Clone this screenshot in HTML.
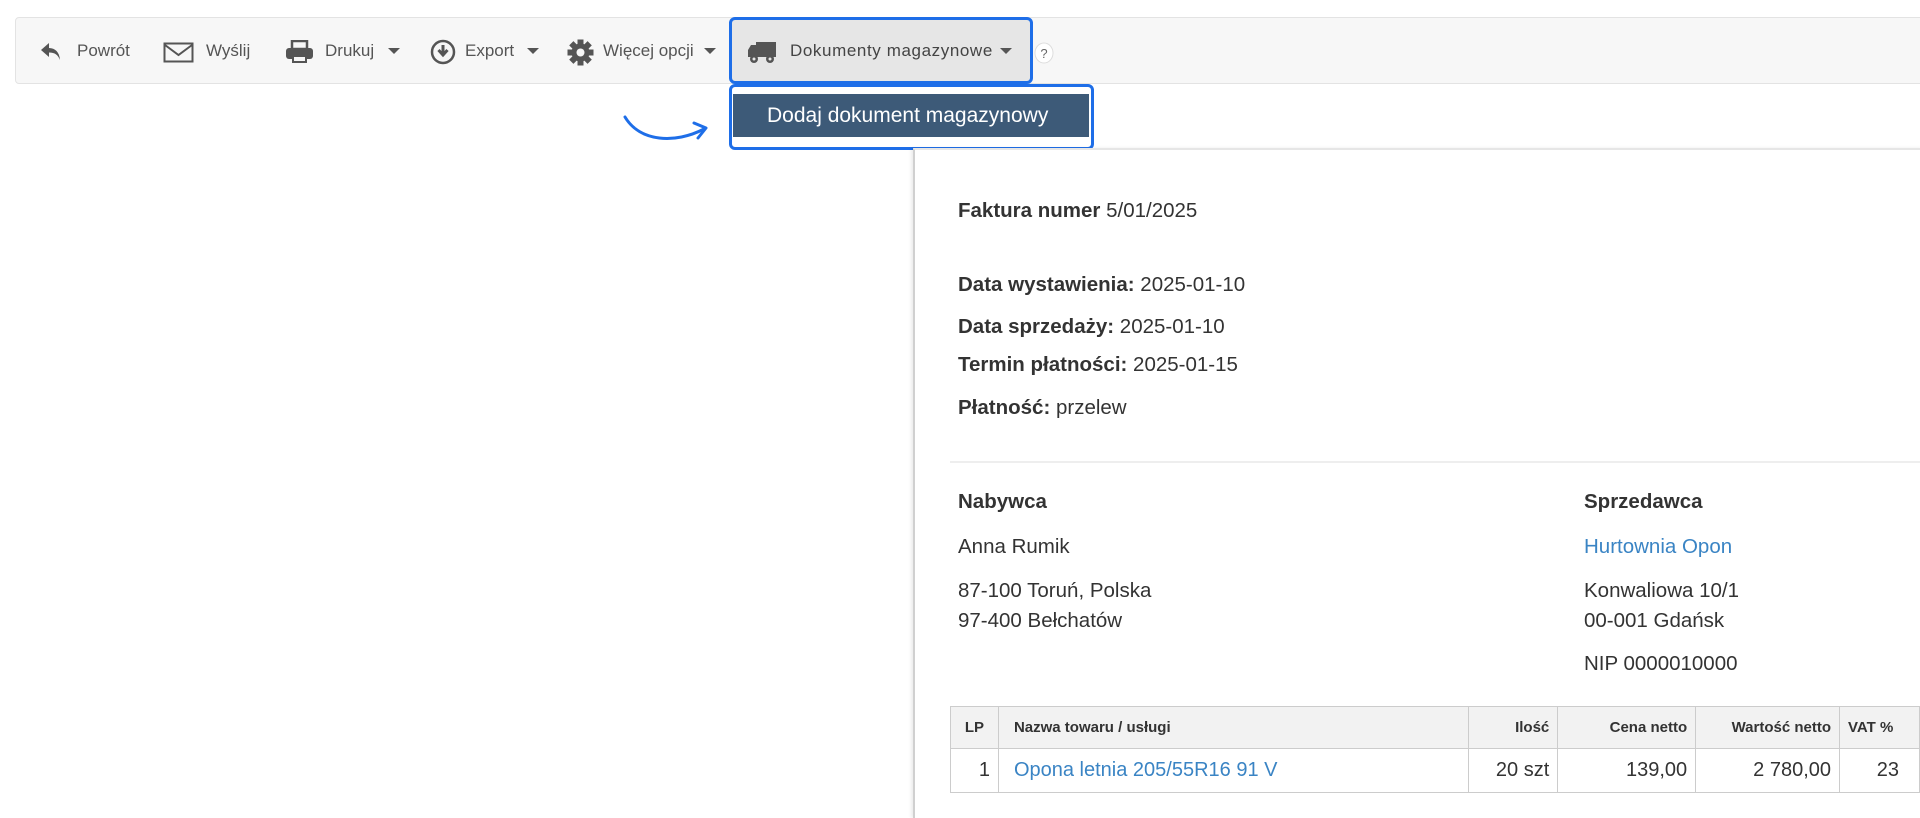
<!DOCTYPE html>
<html><head><meta charset="utf-8"><style>
*{margin:0;padding:0;box-sizing:border-box}
body{width:1920px;height:810px;background:#fff;font-family:"Liberation Sans",sans-serif;position:relative;overflow:hidden;color:#333}
.abs{position:absolute}
.tb{left:15px;top:17px;width:1920px;height:67px;background:#f7f7f7;border:1px solid #e3e3e3;border-radius:4px}
.t{position:absolute;top:41px;font-size:17px;color:#555;line-height:20px;white-space:nowrap}
.car{position:absolute;top:48px;width:0;height:0;border-left:6px solid transparent;border-right:6px solid transparent;border-top:6px solid #555}
.hl{left:729px;top:17px;width:304px;height:67px;background:#e6e6e6;border:3px solid #1e6ee8;border-radius:6px}
.dd{left:729px;top:84px;width:365px;height:66px;background:#fff;border:3px solid #1e6ee8;border-radius:6px}
.item{left:733px;top:94px;width:356px;height:43px;background:#3d5a78;color:#fff;font-size:21px;line-height:43px;padding-left:34px;white-space:nowrap}
.panel{left:913px;top:148px;width:1010px;height:670px;background:#fff;border-left:2px solid #d0d0d0;border-top:2px solid #e6e6e6;box-shadow:-2px 0 3px rgba(0,0,0,.08)}
.d{position:absolute;left:958px;font-size:20.5px;color:#333;white-space:nowrap;line-height:22px}
.d b{font-weight:bold}
.lk{color:#3a84c4}
table{position:absolute;left:950px;top:706px;border-collapse:collapse;font-size:15px}
td,th{border:1px solid #ccc;padding:0 8px;height:42px;white-space:nowrap}
th{background:#f2f2f2;font-weight:bold;color:#333;height:42px}
td{font-size:20px;height:44px}
</style></head><body>
<div class="abs tb"></div>
<div class="abs hl"></div>
<svg class="abs" style="left:40px;top:42px" width="22" height="20" viewBox="0 0 22 20"><path d="M9 1 L1 8 L9 15 V10.5 C15 10.5 18 13 20 18 C19.5 10 15 6 9 6 Z" fill="#555"/></svg>
<div class="t" style="left:77px">Powrót</div>
<svg class="abs" style="left:163px;top:42px" width="31" height="21"><rect x="1.5" y="1.5" width="28" height="18" fill="none" stroke="#555" stroke-width="2"/><path d="M2 3 L15.5 13 L29 3" fill="none" stroke="#555" stroke-width="2"/></svg>
<div class="t" style="left:206px">Wyślij</div>
<svg class="abs" style="left:285px;top:40px" width="29" height="24"><rect x="7" y="1" width="15" height="8" fill="none" stroke="#555" stroke-width="2.5"/><rect x="1" y="8" width="27" height="11" rx="3" fill="#555"/><rect x="7" y="15" width="15" height="8" fill="#555"/><rect x="9" y="17" width="11" height="4" fill="#f7f7f7"/></svg>
<div class="t" style="left:325px">Drukuj</div><div class="car" style="left:388px"></div>
<svg class="abs" style="left:430px;top:39px" width="26" height="26"><circle cx="13" cy="13" r="11" fill="none" stroke="#555" stroke-width="2.5"/><path d="M13 6 V15 M8.5 11 L13 16 L17.5 11" fill="none" stroke="#555" stroke-width="3"/></svg>
<div class="t" style="left:465px">Export</div><div class="car" style="left:527px"></div>
<svg class="abs" style="left:567px;top:39px" width="27" height="27" viewBox="-13.5 -13.5 27 27"><g fill="#555"><circle r="9"/><rect x="-3" y="-13" width="6" height="26"/><rect x="-3" y="-13" width="6" height="26" transform="rotate(45)"/><rect x="-3" y="-13" width="6" height="26" transform="rotate(90)"/><rect x="-3" y="-13" width="6" height="26" transform="rotate(135)"/></g><circle r="4" fill="#f7f7f7"/></svg>
<div class="t" style="left:603px">Więcej opcji</div><div class="car" style="left:704px"></div>
<svg class="abs" style="left:747px;top:40px" width="30" height="24"><rect x="9" y="2" width="20" height="15" fill="#555"/><path d="M1 17 V10 L4 5 H9 V17 Z" fill="#555"/><circle cx="7" cy="19" r="4" fill="#555"/><circle cx="23" cy="19" r="4" fill="#555"/><circle cx="7" cy="19" r="1.5" fill="#e6e6e6"/><circle cx="23" cy="19" r="1.5" fill="#e6e6e6"/></svg>
<div class="t" style="left:790px;color:#444;letter-spacing:0.6px">Dokumenty magazynowe</div><div class="car" style="left:1000px"></div>
<svg class="abs" style="left:1034px;top:42px" width="20" height="22"><ellipse cx="10" cy="11" rx="9" ry="10" fill="#fff" stroke="#ddd"/><text x="10" y="16" font-size="13" text-anchor="middle" fill="#666" font-family="Liberation Sans">?</text></svg>
<div class="abs dd"></div>
<div class="abs item">Dodaj dokument magazynowy</div>
<svg class="abs" style="left:620px;top:112px" width="95" height="35"><path d="M5 5 C20 30 55 32 84 17" fill="none" stroke="#1e6ee8" stroke-width="3" stroke-linecap="round"/><path d="M74 11 L86 16 L78 26" fill="none" stroke="#1e6ee8" stroke-width="3" stroke-linecap="round" stroke-linejoin="round"/></svg>
<div class="abs panel"></div>
<div class="d" style="top:200px"><b>Faktura numer</b> 5/01/2025</div>
<div class="d" style="top:274px"><b>Data wystawienia:</b> 2025-01-10</div>
<div class="d" style="top:316px"><b>Data sprzedaży:</b> 2025-01-10</div>
<div class="d" style="top:354px"><b>Termin płatności:</b> 2025-01-15</div>
<div class="d" style="top:397px"><b>Płatność:</b> przelew</div>
<div class="abs" style="left:950px;top:461px;width:970px;height:2px;background:#eee"></div>
<div class="d" style="top:491px"><b>Nabywca</b></div>
<div class="d" style="top:536px">Anna Rumik</div>
<div class="d" style="top:580px">87-100 Toruń, Polska</div>
<div class="d" style="top:610px">97-400 Bełchatów</div>
<div class="d" style="top:491px;left:1584px"><b>Sprzedawca</b></div>
<div class="d lk" style="top:536px;left:1584px">Hurtownia Opon</div>
<div class="d" style="top:580px;left:1584px">Konwaliowa 10/1</div>
<div class="d" style="top:610px;left:1584px">00-001 Gdańsk</div>
<div class="d" style="top:653px;left:1584px">NIP 0000010000</div>
<table>
<tr><th style="width:48px;text-align:center">LP</th><th style="width:471px;text-align:left;padding-left:15px">Nazwa towaru / usługi</th><th style="width:89px;text-align:right">Ilość</th><th style="width:138px;text-align:right">Cena netto</th><th style="width:144px;text-align:right">Wartość netto</th><th style="width:80px;text-align:left">VAT %</th></tr>
<tr><td style="text-align:right">1</td><td class="lk" style="padding-left:15px">Opona letnia 205/55R16 91 V</td><td style="text-align:right">20 szt</td><td style="text-align:right">139,00</td><td style="text-align:right">2 780,00</td><td style="text-align:right;padding-right:20px">23</td></tr>
</table>
</body></html>
